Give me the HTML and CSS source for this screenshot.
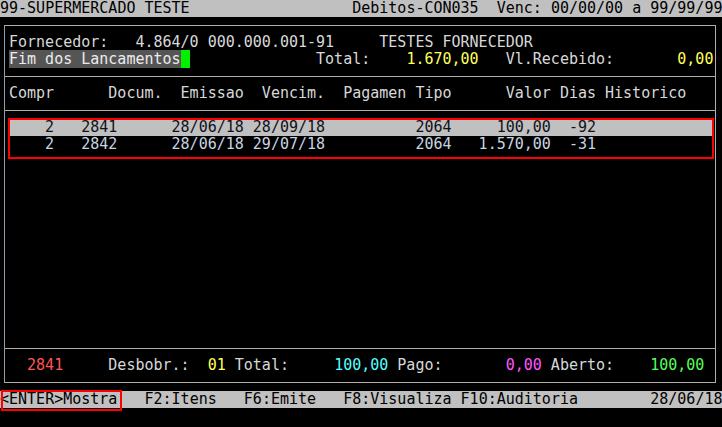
FILE: index.html
```html
<!DOCTYPE html>
<html lang="pt-BR">
<head>
    <meta charset="UTF-8">
    <meta name="viewport" content="width=device-width, initial-scale=1.0">
    <title>Debitos-CON035</title>
    <link rel="stylesheet" href="styles.css">
</head>
<body>
    <div class="screen">
        <div class="bar ln">99-SUPERMERCADO TESTE                  Debitos-CON035  Venc: 00/00/00 a 99/99/99</div>

        <div class="frame">
            <div class="sec">
                <div class="ln">Fornecedor:   4.864/0 000.000.001-91     TESTES FORNECEDOR</div>
                <div class="ln"><span class="hl">Fim dos Lancamentos</span><span class="cursor"> </span>              Total:    <span class="y">1.670,00</span>   Vl.Recebido:       <span class="y">0,00</span></div>
            </div>

            <div class="sec">
                <div class="ln">Compr      Docum.  Emissao  Vencim.  Pagamen Tipo      Valor Dias Historico</div>
            </div>

            <div class="sec list">
                <div class="marked">
                    <div class="ln row sel">    2   2841      28/06/18 28/09/18          2064     100,00  -92</div>
                    <div class="ln row">    2   2842      28/06/18 29/07/18          2064   1.570,00  -31</div>
                </div>
            </div>

            <div class="sec">
                <div class="ln">  <span class="r">2841</span>     Desbobr.:  <span class="y">01</span> Total:     <span class="c">100,00</span> Pago:       <span class="m">0,00</span> Aberto:    <span class="g">100,00</span></div>
            </div>
        </div>

        <div class="bar ln"><span class="key-mark">&lt;ENTER&gt;Mostra</span>   F2:Itens   F6:Emite   F8:Visualiza F10:Auditoria        28/06/18</div>
    </div>
</body>
</html>
```

FILE: styles.css
```css
body {
    margin: 0;
    background-color: #000;
    font-family: 'DejaVu Sans Mono', 'Liberation Mono', monospace;
    font-size: 15px;
    line-height: 17px;
    color: #d8d8d8;
}

.screen {
    width: 722px;
    height: 427px;
    overflow: hidden;
}

.ln {
    white-space: pre;
    height: 17px;
}

.bar {
    background-color: #c0c0c0;
    color: #000;
}

.frame {
    margin: 8px 6px 8px 4px;
    border: 1px solid #b4aea8;
    border-left-color: #8f9fb0;
}

.sec {
    padding: 8px 0 8px 4px;
    border-top: 1px solid #b4aea8;
}

.sec:first-child {
    border-top: none;
}

.list {
    height: 221px;
}

.hl {
    background-color: #555;
    color: #ececec;
}

.cursor {
    background-color: #00f000;
}

.y {
    color: #ffff55;
}

.r {
    color: #ff5555;
}

.c {
    color: #55ffff;
}

.m {
    color: #ff55ff;
}

.g {
    color: #55ff55;
}

.marked {
    position: relative;
    margin-right: 3px;
}

.marked::after {
    content: '';
    position: absolute;
    left: -1px;
    top: -1px;
    right: -2px;
    bottom: -6px;
    border: 2px solid #ff0000;
}

.row {
    color: #c8d4e0;
}

.row.sel {
    background-color: #c0c0c0;
    color: #101018;
}

.key-mark {
    position: relative;
    display: inline-block;
    height: 17px;
    vertical-align: top;
}

.key-mark::after {
    content: '';
    position: absolute;
    left: 1px;
    top: -1px;
    right: -5px;
    bottom: -3px;
    border: 2px solid #ff0000;
}
```
